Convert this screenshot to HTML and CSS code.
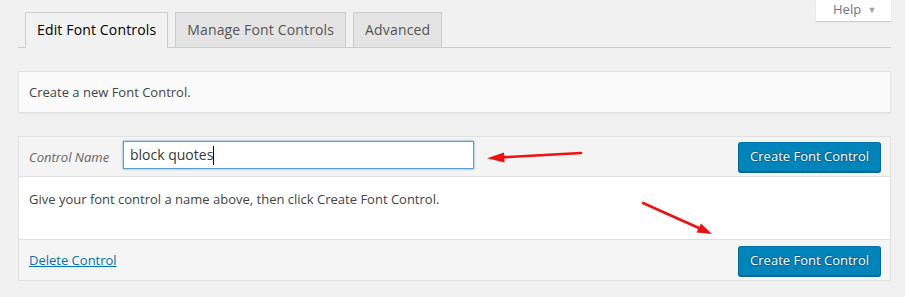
FILE: index.html
```html
<!DOCTYPE html>
<html lang="en">
<head>
  <meta charset="UTF-8">
  <title>Edit Font Controls</title>
  <link rel="stylesheet" href="styles.css">
</head>
<body>
  <div class="wrap">
    <div class="nav-row">
      <nav class="nav-tabs">
        <a class="nav-tab active" href="#">Edit Font Controls</a>
        <a class="nav-tab" href="#">Manage Font Controls</a>
        <a class="nav-tab" href="#">Advanced</a>
      </nav>
      <a class="help-link" href="#">Help <span class="help-arrow">&#9660;</span></a>
    </div>

    <div class="manage-box">Create a new Font Control.</div>

    <div class="edit-box">
      <div class="edit-header">
        <label class="control-label">Control Name</label>
        <div class="name-input">block quotes<span class="caret"></span></div>
        <button class="button-primary">Create Font Control</button>
      </div>
      <div class="edit-body">Give your font control a name above, then click Create Font Control.</div>
      <div class="edit-footer">
        <a class="delete-link" href="#">Delete Control</a>
        <button class="button-primary">Create Font Control</button>
      </div>
    </div>
  </div>

  <!-- annotation arrows -->
  <svg class="arrows" width="905" height="297" viewBox="0 0 905 297">
    <line x1="581" y1="153" x2="500" y2="157.4" stroke="#ee1111" stroke-width="2.6" stroke-linecap="round"/>
    <polygon points="487,158.2 504,152.6 504.6,162.4" fill="#ee1111"/>
    <line x1="643" y1="203" x2="700" y2="228.5" stroke="#ee1111" stroke-width="2.6" stroke-linecap="round"/>
    <polygon points="712,234 696.5,232.5 701,223.5" fill="#ee1111"/>
  </svg>
</body>
</html>
```

FILE: styles.css
```css
body {
  margin: 0;
  background: #f1f1f1;
  font-family: "Open Sans", "Liberation Sans", sans-serif;
  font-size: 13px;
  color: #444;
  position: relative;
}

.wrap {
  margin: 0 14px 0 18px;
  width: 873px;
}

/* tabs */
.nav-row {
  display: flex;
  justify-content: space-between;
  align-items: flex-start;
  height: 47px;
  border-bottom: 1px solid #ccc;
}

.nav-tabs {
  display: flex;
  align-self: flex-end;
  padding-left: 7px;
  gap: 7px;
}

.nav-tab {
  display: block;
  height: 34px;
  line-height: 34px;
  padding: 0 11px 0 11px;
  border: 1px solid #ccc;
  border-bottom: none;
  background: #e4e4e4;
  color: #555;
  font-size: 14px;
  letter-spacing: 0.15px;
  text-decoration: none;
  margin-bottom: -1px;
}

.nav-tab.active {
  background: #f1f1f1;
  color: #000;
  height: 35px;
}

.help-link {
  display: block;
  width: 75px;
  height: 21px;
  line-height: 19px;
  box-sizing: border-box;
  background: #fff;
  box-shadow: 0 1px 1px rgba(0,0,0,0.15);
  color: #72777c;
  font-size: 13px;
  text-decoration: none;
  padding-left: 17px;
}

.help-arrow {
  font-size: 9px;
  color: #a0a5aa;
  margin-left: 3px;
  vertical-align: 1px;
}

/* boxes */
.manage-box {
  margin-top: 23px;
  background: #fbfbfb;
  border: 1px solid #e1e1e1;
  box-shadow: 0 1px 1px rgba(0,0,0,0.04);
  padding: 10px;
  line-height: 20px;
}

.edit-box {
  margin-top: 23px;
  border: 1px solid #e1e1e1;
  box-shadow: 0 1px 1px rgba(0,0,0,0.04);
  background: #fff;
}

.edit-header {
  display: flex;
  align-items: flex-start;
  background: #f4f4f4;
  border-bottom: 1px solid #dfdfdf;
  padding: 5px 9px 4px 10px;
}

.control-label {
  width: 94px;
  line-height: 30px;
  font-style: italic;
  color: #666;
}

.name-input {
  width: 351px;
  height: 28px;
  box-sizing: border-box;
  margin-top: -1px;
  border: 1px solid #5b9dd9;
  box-shadow: 0 0 2px rgba(30,140,190,0.8);
  background: #fff;
  color: #32373c;
  font-size: 14px;
  line-height: 25px;
  padding: 0 6px;
}

.caret {
  display: inline-block;
  width: 1px;
  height: 19px;
  background: #000;
  vertical-align: -5px;
}

.button-primary {
  margin-left: auto;
  height: 30px;
  padding: 0 11px 2px;
  font-family: inherit;
  font-size: 13px;
  line-height: 26px;
  color: #fff;
  background: #0085ba;
  border: 1px solid;
  border-color: #0073aa #006799 #006799;
  border-radius: 3px;
  box-shadow: 0 1px 0 #006799;
  text-shadow: 0 -1px 1px #006799, 1px 0 1px #006799, 0 1px 1px #006799, -1px 0 1px #006799;
}

.edit-body {
  padding: 12px 10px 30px;
  line-height: 20px;
}

.edit-footer {
  display: flex;
  align-items: center;
  background: #f5f5f5;
  border-top: 1px solid #dfdfdf;
  padding: 6px 9px 4px 10px;
}

.delete-link {
  color: #0073aa;
  text-decoration: underline;
  margin-top: -3px;
}

.arrows {
  position: absolute;
  left: 0;
  top: 0;
  pointer-events: none;
}
```
